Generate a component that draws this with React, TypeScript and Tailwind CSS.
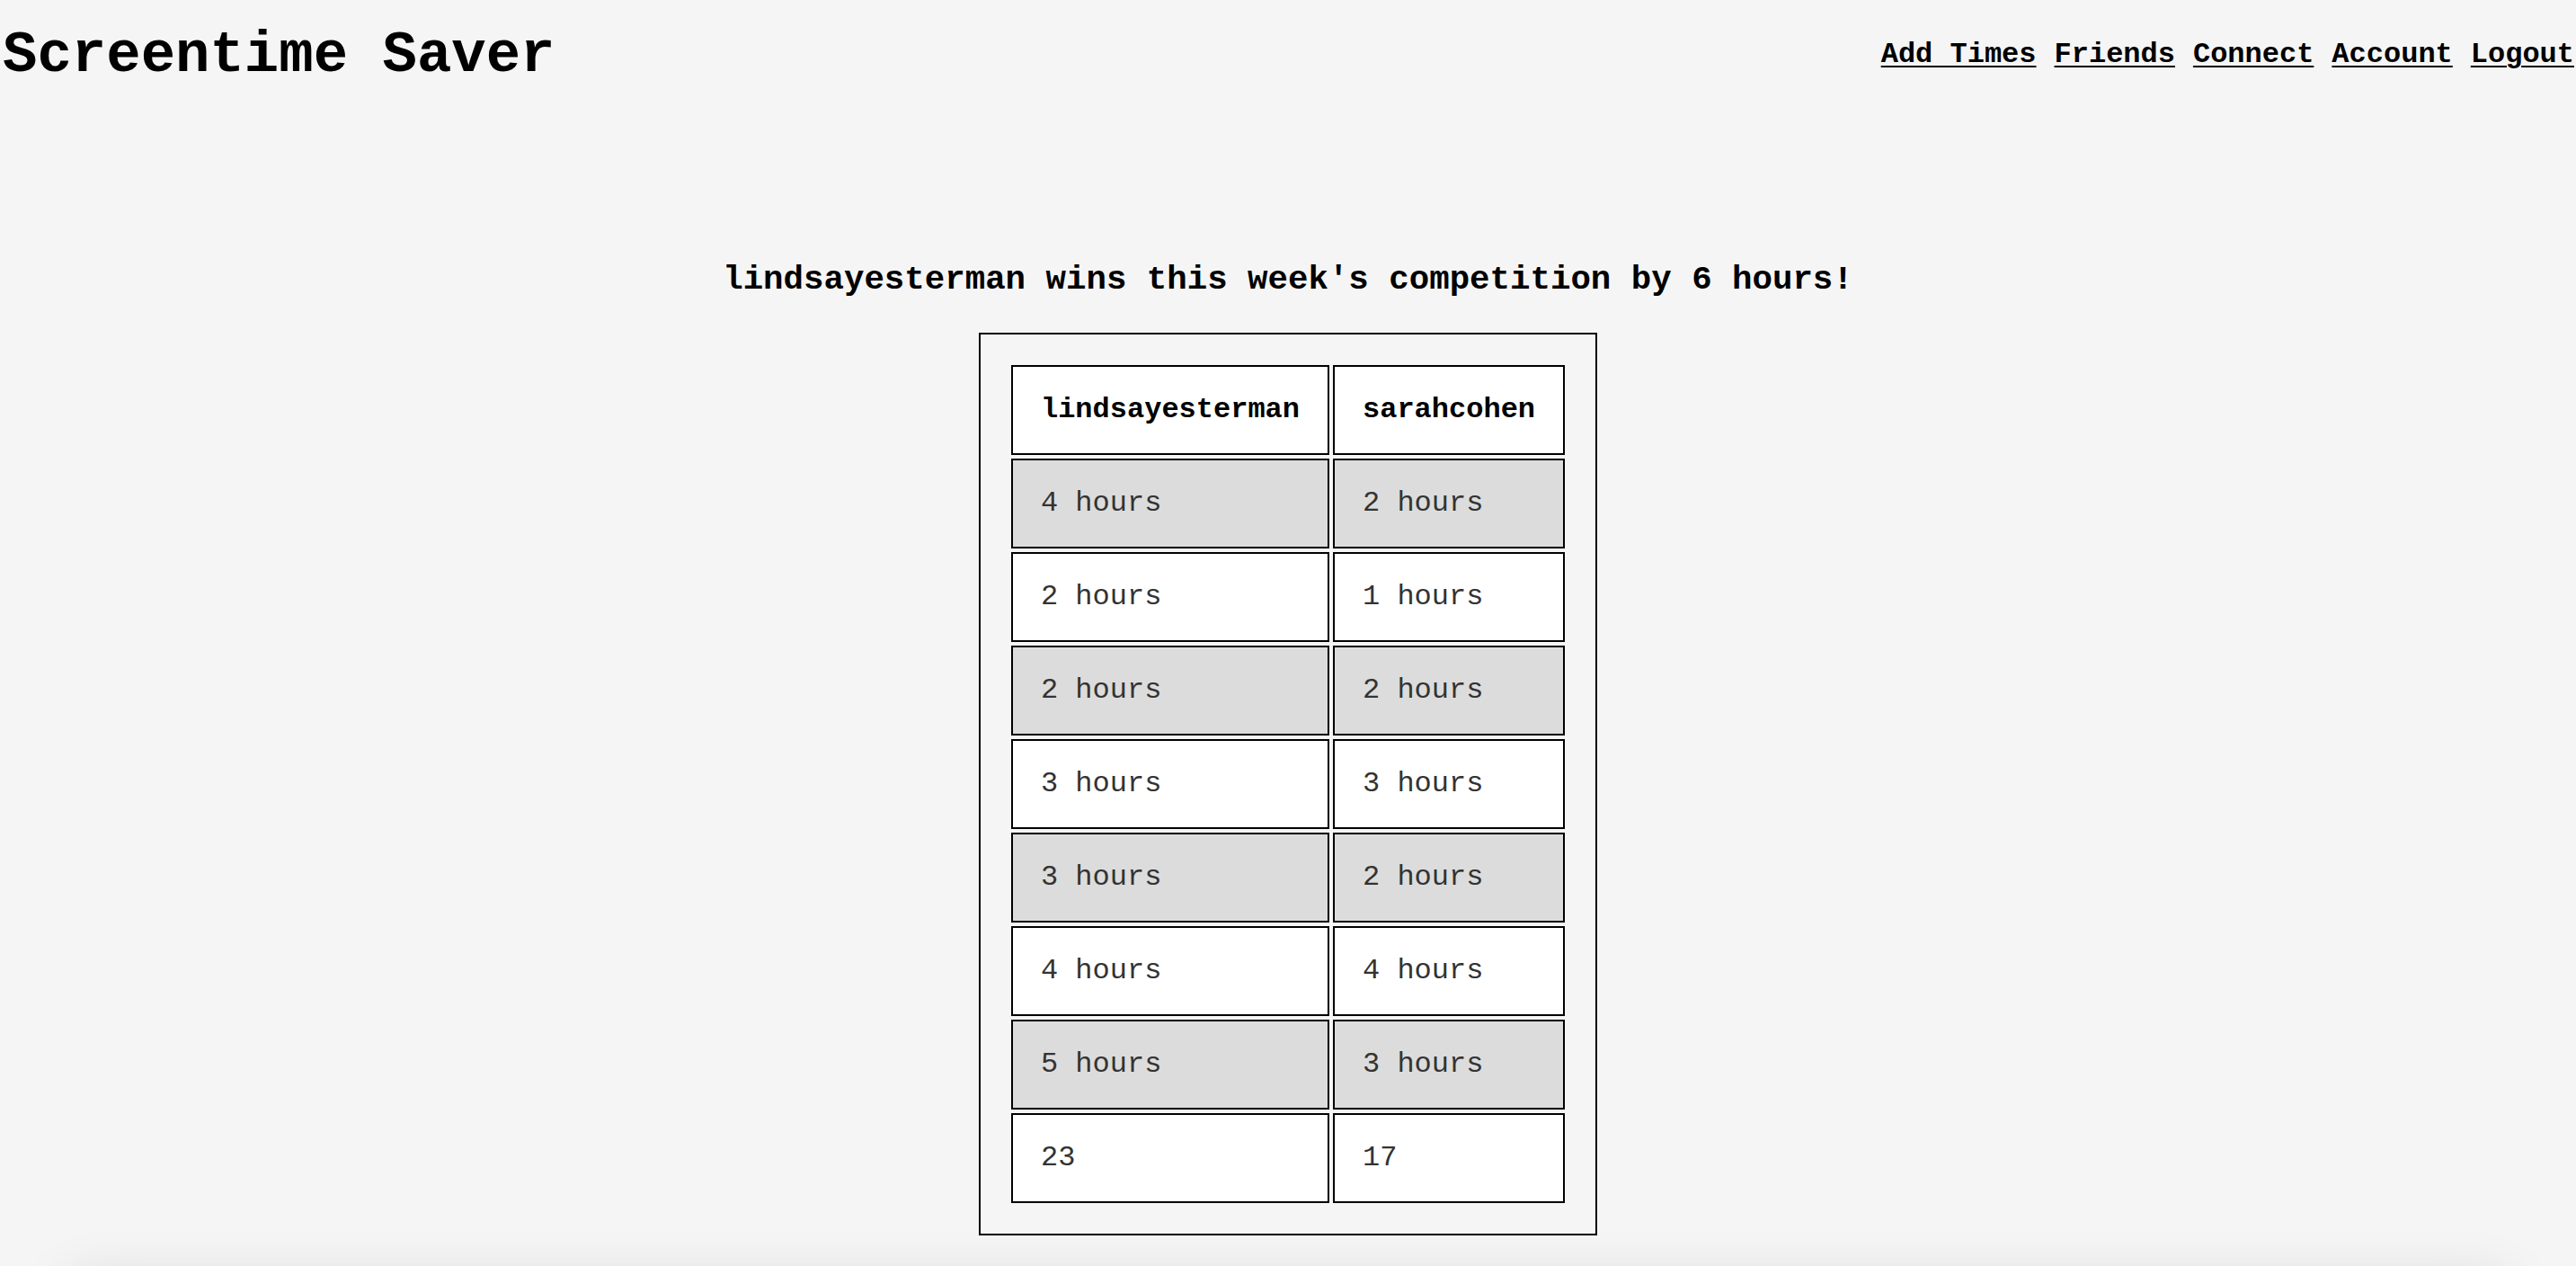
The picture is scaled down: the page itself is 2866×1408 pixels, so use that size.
export default function App() {
  const rows: [number, number][] = [
    [4, 2],
    [2, 1],
    [2, 2],
    [3, 3],
    [3, 2],
    [4, 4],
    [5, 3],
  ];
  const total = rows.reduce((a, r) => [a[0] + r[0], a[1] + r[1]], [0, 0]);
  const links = ["Add Times", "Friends", "Connect", "Account", "Logout"];
  const cell = "border-2 border-black px-[31px] py-[30px] text-[32px] leading-[36px] text-left whitespace-nowrap";
  return (
    <div className="min-h-screen bg-[#f5f5f5] text-black font-['Liberation_Mono','Courier_New',monospace] overflow-hidden">
      <header className="flex justify-between items-start">
        <h1 className="mt-[26px] ml-[3px] text-[64px] leading-[72px] font-bold">Screentime Saver</h1>
        <nav className="mt-[43px] mr-[2px] flex gap-[20px] text-[32px] leading-[36px] font-bold">
          {links.map((l) => (
            <a key={l} href="#" className="underline decoration-2 underline-offset-[4px] text-black">
              {l}
            </a>
          ))}
        </nav>
      </header>
      <main className="flex flex-col items-center">
        <h2 className="mt-[192px] text-[37.44px] leading-[42px] font-bold text-center">
          lindsayesterman wins this week's competition by 6 hours!
        </h2>
        <div className="mt-[38px] border-2 border-black p-[30px]">
          <table className="border-separate border-spacing-[4px]">
            <thead>
              <tr>
                <th className={`${cell} bg-white font-bold`}>lindsayesterman</th>
                <th className={`${cell} bg-white font-bold`}>sarahcohen</th>
              </tr>
            </thead>
            <tbody>
              {rows.map((r, i) => (
                <tr key={i} className={i % 2 === 0 ? "bg-[#dcdcdc]" : "bg-white"}>
                  <td className={`${cell} font-normal text-[#333]`}>{r[0]} hours</td>
                  <td className={`${cell} font-normal text-[#333]`}>{r[1]} hours</td>
                </tr>
              ))}
              <tr className="bg-white">
                <td className={`${cell} font-normal text-[#333]`}>{total[0]}</td>
                <td className={`${cell} font-normal text-[#333]`}>{total[1]}</td>
              </tr>
            </tbody>
          </table>
        </div>
        <div className="mt-[48px] h-[300px] w-[calc(100%-140px)] rounded-[24px] bg-[#f5f5f5] shadow-[0_0_60px_rgba(0,0,0,0.12)]"></div>
      </main>
    </div>
  );
}
